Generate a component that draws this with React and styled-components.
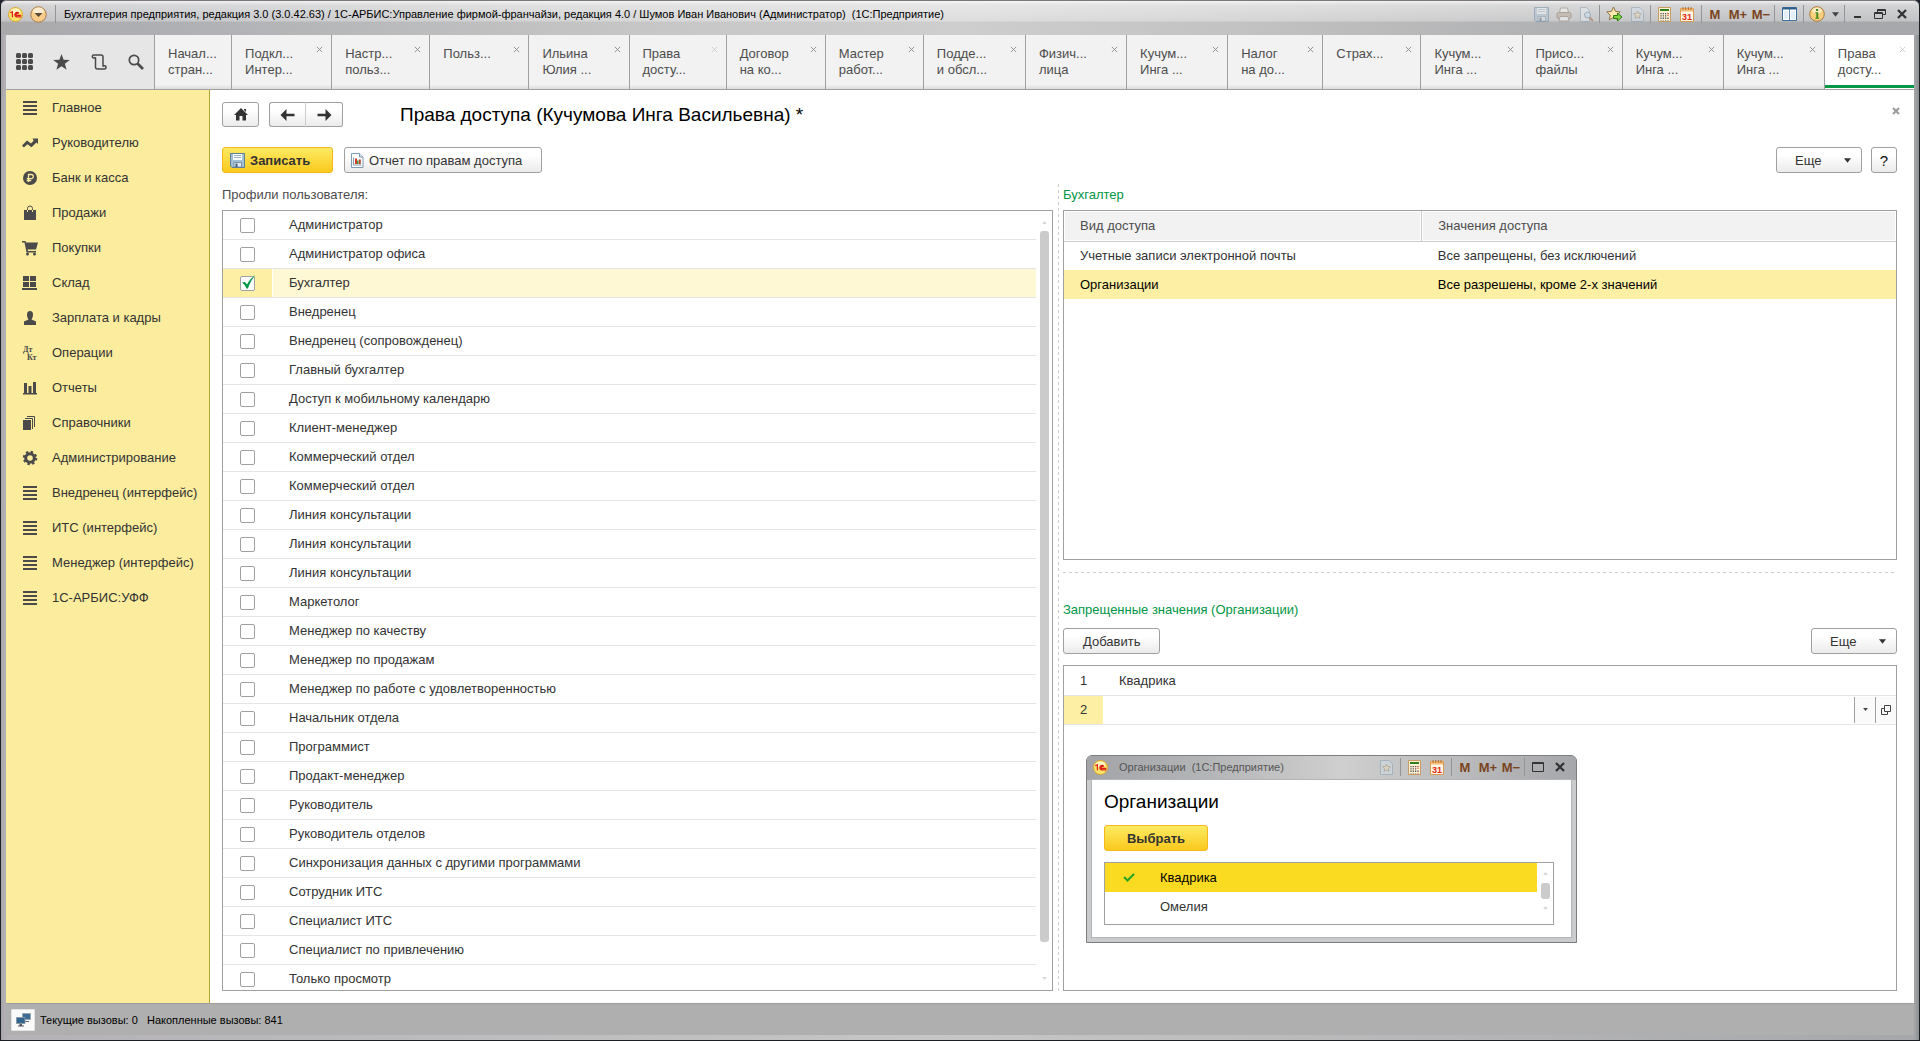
import React, { useState } from 'react';
import styled, { createGlobalStyle } from 'styled-components';

const GlobalStyle = createGlobalStyle`
  * {
    box-sizing: border-box;
  }
  body {
    margin: 0;
    background: #20242e;
    color: #333;
    font-family: "Liberation Sans", Arial, sans-serif;
    font-size: 13px;
  }
  button, input {
    font: inherit;
    color: inherit;
  }
  svg {
    display: block;
    flex: none;
  }
`;

const Frame = styled.div`
  height: 100vh;
  display: flex;
  flex-direction: column;
  padding: 0 5px 5px;
  background: linear-gradient(90deg, #a9a6aa 0, #b4b2b6 5px, #c6c6c6 50%, #a6a7aa calc(100% - 5px), #8c9090 100%);
  border: solid #1c1f24;
  border-width: 0 1px 1px;
  border-radius: 6px 6px 0 0;
`;

const TitleBar = styled.header`
  height: 35px;
  margin: 0 -5px;
  padding: 0 6px 8px 7px;
  display: flex;
  align-items: center;
  border-top: 1px solid #7c777b;
  border-radius: 6px 6px 0 0;
  background:
    linear-gradient(180deg, #ffffffd0 0, #ffffff80 4px, #ffffff50 20px, transparent 21px),
    linear-gradient(90deg, #a9a9ac 0, #b0b1b4 10%, #c6c6c6 33%, #cecece 50%, #c2c2c2 65%, #a7a8ab 90%);
`;

const WindowTitle = styled.div`
  flex: 1;
  margin-left: 6px;
  color: #000;
  font-size: 11px;
  white-space: pre;
`;

const TitleTools = styled.div`
  display: flex;
  align-items: center;
`;

const ToolButton = styled.button`
  width: ${(p) => p.$width || 24}px;
  height: 20px;
  padding: 0;
  border: 0;
  background: none;
  display: flex;
  align-items: center;
  justify-content: center;
  color: ${(p) => (p.$memory ? '#7a4320' : '#444')};
  font-size: 13px;
  font-weight: bold;
  opacity: ${(p) => (p.$faded ? 0.45 : 1)};
`;

const ToolSeparator = styled.span`
  width: 1px;
  height: 18px;
  margin: 0 2px;
  background: #939497;
`;

const TabBar = styled.div`
  height: 55px;
  display: flex;
  border-bottom: 1px solid #a0a0a0;
  background: #f2f2f2;
`;

const QuickTools = styled.div`
  width: 148px;
  flex: none;
  display: flex;
  align-items: center;
  background: #e6e6e6;
`;

const QuickButton = styled.button`
  flex: 1;
  height: 36px;
  padding: 0;
  border: 0;
  background: none;
  color: #4a4a4a;
  display: flex;
  align-items: center;
  justify-content: center;
`;

const Tab = styled.div`
  flex: ${(p) => p.$grow} 1 0;
  min-width: 0;
  padding: 11px 8px 0 13px;
  display: flex;
  align-items: flex-start;
  justify-content: space-between;
  border-left: 1px solid #a0a0a0;
  background: ${(p) => (p.$active ? '#fff' : 'linear-gradient(#f2f2f2 92%, #dcdcdc)')};
  box-shadow: ${(p) => (p.$active ? 'inset 0 -1px #fff, inset 0 -4px #009846' : 'none')};
`;

const TabLabel = styled.button`
  padding: 0;
  border: 0;
  background: none;
  color: #4d4d4d;
  text-align: left;
  line-height: 16px;
  white-space: pre;
`;

const TabClose = styled.button`
  padding: 0;
  border: 0;
  background: none;
  color: ${(p) => (p.$faded ? '#ccc' : '#888')};
`;

const Workspace = styled.div`
  flex: 1;
  min-height: 0;
  display: flex;
  background: #fff;
`;

const Sidebar = styled.nav`
  width: 204px;
  flex: none;
  background: #fbec9e;
  border-right: 1px solid #b3a42b;
`;

const SidebarLink = styled.a`
  height: 35px;
  padding-left: 16px;
  display: flex;
  align-items: center;
  gap: 14px;
  color: #333;
  text-decoration: none;
  white-space: nowrap;

  svg {
    color: #4a4a4a;
  }
`;

const Form = styled.main`
  flex: 1;
  min-width: 0;
  padding: 12px 17px 12px 12px;
  display: flex;
  flex-direction: column;
`;

const FormHeader = styled.div`
  height: 25px;
  margin-right: -3px;
  display: flex;
  align-items: center;
`;

const Button = styled.button`
  height: 26px;
  padding: 0 19px;
  display: flex;
  align-items: center;
  justify-content: center;
  gap: 5px;
  border: 1px solid #a0a0a0;
  border-radius: 3px;
  background: linear-gradient(#fff 30%, #ebebeb);
  color: #333;
  white-space: nowrap;
`;

const HomeButton = styled(Button)`
  width: 37px;
  height: 25px;
  padding: 0;
`;

const PrimaryButton = styled(Button)`
  border-color: #f4b81c;
  background: linear-gradient(#fdea64, #fbc91d);
  font-weight: bold;
`;

const SaveButton = styled(PrimaryButton)`
  width: 111px;
  padding: 0 7px;
  justify-content: flex-start;
`;

const ReportButton = styled(Button)`
  width: 198px;
  padding: 0 6px;
  justify-content: flex-start;
`;

const MoreButton = styled(Button)`
  width: 86px;
  padding: 0 10px 0 18px;
  justify-content: space-between;
`;

const HelpButton = styled(Button)`
  width: 26px;
  padding: 0;
  color: #111;
  font-size: 15px;
`;

const Arrows = styled.div`
  display: flex;
  margin-left: 10px;

  button {
    width: 37px;
    height: 25px;
    padding: 0;
  }
  button:first-child {
    border-radius: 3px 0 0 3px;
    border-right-color: #ccc;
  }
  button:last-child {
    border-radius: 0 3px 3px 0;
    border-left: 0;
  }
`;

const FormTitle = styled.h1`
  flex: 1;
  margin: 0 0 0 57px;
  color: #000;
  font-size: 19px;
  font-weight: normal;
`;

const FormClose = styled.button`
  align-self: flex-start;
  padding: 5px 0 0;
  border: 0;
  background: none;
  color: #999;
`;

const CommandBar = styled.div`
  margin-top: ${(p) => p.$top}px;
  display: flex;
  justify-content: space-between;
`;

const Commands = styled.div`
  display: flex;
  gap: ${(p) => p.$gap}px;
`;

const Split = styled.div`
  flex: 1;
  min-height: 0;
  margin-top: 11px;
  display: flex;
`;

const Column = styled.section`
  flex: ${(p) => p.$grow} 1 0;
  min-width: 0;
  display: flex;
  flex-direction: column;
`;

const VerticalSplitter = styled.div`
  width: 1px;
  margin: 0 4px 0 5px;
  background: repeating-linear-gradient(#ccc 0 3px, transparent 3px 6px);
`;

const HorizontalSplitter = styled.div`
  height: 1px;
  margin: 12px 0 26px;
  background: repeating-linear-gradient(90deg, #ccc 0 3px, transparent 3px 6px);
`;

const GroupTitle = styled.div`
  height: 20px;
  line-height: 22px;
  color: ${(p) => (p.$green ? '#009646' : '#4d4d4d')};
`;

const Box = styled.div`
  flex: ${(p) => p.$grow || 1} 1 0;
  min-height: 0;
  margin-top: ${(p) => p.$top}px;
  display: flex;
  border: 1px solid #a0a0a0;
  background: #fff;
  overflow: hidden;
`;

const ProfileList = styled.div`
  flex: 1;
  overflow: hidden;
`;

const ProfileRow = styled.label`
  height: 29px;
  display: flex;
  border-bottom: 1px solid #e5e5e5;
  background: ${(p) => (p.$checked ? '#fef8d4' : '#fff')};
`;

const CheckCell = styled.span`
  width: 50px;
  display: flex;
  align-items: center;
  padding-left: 17px;
  border-right: 1px solid #fff;
  background: ${(p) => (p.$checked ? '#fdf0a4' : '#fff')};
`;

const Checkbox = styled.input`
  appearance: none;
  flex: none;
  width: 15px;
  height: 15px;
  margin: 0;
  border: 1px solid #a0a0a0;
  border-radius: 2px;
  background: #fff;
`;

const CheckMark = styled.svg`
  margin-left: -13px;
  margin-top: -3px;
  pointer-events: none;
`;

const ProfileName = styled.span`
  padding-left: 16px;
  line-height: 28px;
`;

const ScrollTrack = styled.div`
  width: 16px;
  padding: ${(p) => p.$padding};
  display: flex;
  flex-direction: column;
  align-items: center;
  gap: ${(p) => p.$gap}px;
  color: #d8d8d8;
`;

const ScrollThumb = styled.div`
  width: 9px;
  flex: ${(p) => (p.$height ? 'none' : '1')};
  height: ${(p) => (p.$height ? p.$height + 'px' : 'auto')};
  margin-bottom: ${(p) => p.$rest || 0}px;
  border-radius: 3px;
  background: #cbcbcb;
`;

const Table = styled.table`
  width: 100%;
  align-self: flex-start;
  table-layout: fixed;
  border-collapse: collapse;
  text-align: left;
`;

const HeadCell = styled.th`
  width: ${(p) => p.$width || 'auto'};
  height: 30px;
  padding: 0 16px;
  border-bottom: 1px solid #ccc;
  border-right: 1px solid #ccc;
  background: #f2f2f2;
  box-shadow: inset 0 0 0 1px #fff;
  color: #4d4d4d;
  font-weight: normal;

  &:last-child {
    border-right: 0;
  }
`;

const AccessRow = styled.tr`
  height: 29px;
  background: ${(p) => (p.$selected ? '#fdf0a4' : '#fff')};
  color: ${(p) => (p.$selected ? '#000' : '#333')};

  td {
    padding: 0 16px;
  }
`;

const ValueRow = styled.tr`
  height: 29px;
  border-bottom: 1px solid #e5e5e5;

  th {
    width: 39px;
    padding: 0;
    font-weight: normal;
    text-align: center;
    background: ${(p) => (p.$editing ? '#fdf0a4' : '#fff')};
  }
  td {
    padding: 0 0 0 ${(p) => (p.$editing ? 0 : 16)}px;
  }
`;

const ValueEditor = styled.div`
  height: 28px;
  padding: 1px 0;
  display: flex;
`;

const ValueInput = styled.input`
  flex: 1;
  min-width: 0;
  padding: 0 16px;
  border: 0;
  outline: 0;
  background: #fff;
`;

const EditorButton = styled.button`
  width: 21px;
  padding: 0;
  border: 0;
  border-left: 1px solid #a0a0a0;
  background: #fafafa;
  color: #444;
  display: flex;
  align-items: center;
  justify-content: center;
`;

const StatusBar = styled.footer`
  height: 32px;
  padding-left: 5px;
  display: flex;
  align-items: center;
  gap: 5px;
  border-top: 1px solid #9c9c9c;
  background: #afafaf;
  color: #000;
  font-size: 11px;
  white-space: pre;
`;

const StatusButton = styled.button`
  width: 24px;
  height: 22px;
  padding: 0;
  border: 1px solid #e3e3e3;
  border-radius: 1px;
  background: #fafafa;
  display: flex;
  align-items: center;
  justify-content: center;
`;

const Dialog = styled.section`
  position: absolute;
  left: 1086px;
  top: 755px;
  width: 491px;
  padding: 0 5px 5px;
  border: 1px solid #7e7e80;
  border-radius: 6px 6px 0 0;
  background: #c9cbcc;
`;

const DialogBar = styled.header`
  height: 24px;
  margin: 0 -5px;
  padding: 0 5px 2px 6px;
  display: flex;
  align-items: center;
  border-radius: 5px 5px 0 0;
  background: linear-gradient(90deg, #a3a4a7, #b4b5b7 25%, #cfcfcf 52%, #a6a7aa);
`;

const DialogCaption = styled.div`
  flex: 1;
  margin-left: 11px;
  color: #555;
  font-size: 11px;
  white-space: pre;
`;

const DialogBody = styled.div`
  padding: 11px 17px 12px 12px;
  display: flex;
  flex-direction: column;
  align-items: flex-start;
  background: #fff;
  box-shadow: 0 0 0 1px #b3b4b6;
`;

const DialogTitle = styled.h2`
  margin: 0;
  line-height: 22px;
  color: #000;
  font-size: 19px;
  font-weight: normal;
`;

const SelectButton = styled(PrimaryButton)`
  width: 104px;
  margin-top: 12px;
`;

const DialogList = styled.div`
  width: 100%;
  height: 63px;
  margin-top: 11px;
  display: flex;
  border: 1px solid #a0a0a0;
`;

const OptionList = styled.div`
  flex: 1;
`;

const Option = styled.button`
  width: 100%;
  height: 29px;
  padding: 0 0 0 18px;
  border: 0;
  display: flex;
  align-items: center;
  background: ${(p) => (p.$selected ? '#fbdb22' : '#fff')};
  color: ${(p) => (p.$selected ? '#000' : '#333')};
`;

const OptionMark = styled.span`
  width: 37px;
  color: #27a327;
`;

/* ---------- icons ---------- */

const Cross = ({ size = 7, width = 1 }) => (
  <svg width={size} height={size} viewBox="0 0 8 8" stroke="currentColor" strokeWidth={width} fill="none">
    <path d="M1 1l6 6M7 1L1 7" />
  </svg>
);

const Caret = ({ size = 7, up }) => (
  <svg width={size} height={size - 2} viewBox="0 0 8 5" fill="currentColor">
    <path d={up ? 'M0 5h8L4 0z' : 'M0 0h8L4 5z'} />
  </svg>
);

const Logo1C = () => (
  <svg width="15" height="15" viewBox="0 0 16 16">
    <circle cx="8" cy="8" r="7.5" fill="#fbe26b" stroke="#d9a52c" />
    <ellipse cx="8" cy="4.5" rx="5" ry="3" fill="#fff6c4" />
    <path d="M2.5 6.2L4.7 5v6M11.6 6.6a2.4 2.4 0 1 0-1.8 3.9h4.4M11 7.6a1.2 1.2 0 1 0-1.2 1.4h4.4" fill="none" stroke="#dc1f17" strokeWidth="1.3" />
  </svg>
);

const MenuBall = () => (
  <svg width="17" height="17" viewBox="0 0 17 17">
    <circle cx="8.500" cy="8.500" r="7.700" fill="#f8cd8b" stroke="#a97a45" />
    <ellipse cx="8.500" cy="5" rx="5.500" ry="3.500" fill="#fdebcf" />
    <path d="M4.500 7h8l-4 4z" fill="#5a4a3c" />
  </svg>
);

const Floppy = () => (
  <svg width="15" height="15" viewBox="0 0 15 15">
    <path d="M.5.500h14v14H2l-1.500-1.500z" fill="#a3bfd4" stroke="#5f7f9a" />
    <path d="M3 1h9v6H3z" fill="#f6fafc" />
    <path d="M4 2.500h7M4 4.500h7" stroke="#9fb6c8" />
    <path d="M4 9.500h7.500V14H4z" fill="#e4ebf0" stroke="#5c7a94" strokeWidth=".7" />
    <path d="M5.500 10.500h2V14h-2z" fill="#3f5d78" />
  </svg>
);

const Printer = () => (
  <svg width="16" height="15" viewBox="0 0 16 15">
    <path d="M4.500 1h7l1 5h-9z" fill="#fff" stroke="#8a7a66" />
    <rect x="1" y="5.500" width="14" height="6" rx="1.500" fill="#b9a78f" stroke="#7c6a55" />
    <path d="M4 9.500h8l1 4.500H3z" fill="#fff" stroke="#8a7a66" />
  </svg>
);

const Preview = () => (
  <svg width="15" height="15" viewBox="0 0 15 15" fill="none">
    <path d="M1.500.500h6l3 3v11h-9z" fill="#e9f1f6" stroke="#7f9bb0" />
    <circle cx="8.500" cy="8" r="3" fill="#cfe3f1" stroke="#5f86a5" />
    <path d="M10.500 10.500l3.500 3.500" stroke="#9c5b33" strokeWidth="2" />
  </svg>
);

const StarGo = () => (
  <svg width="17" height="16" viewBox="0 0 17 16">
    <path d="M7.500 1l2 4.400 4.700.500-3.500 3.200 1 4.700-4.200-2.400-4.200 2.400 1-4.700L.8 5.900l4.700-.5z" fill="#ffe9ae" stroke="#8d7347" />
    <path d="M7.500 9.500h4V7l4.500 4-4.500 4v-2.500h-4z" fill="#7ed33f" stroke="#2f7d14" />
  </svg>
);

const PageStar = () => (
  <svg width="13" height="15" viewBox="0 0 13 15">
    <path d="M.5.500h8.500l3.500 3.500v10.500H.5z" fill="#d3e2ee" stroke="#7f98ac" />
    <path d="M6.500 4l1.200 2.500 2.800.3-2.100 1.900.6 2.700-2.500-1.400L4 11.400l.6-2.700-2.100-1.900 2.800-.3z" fill="#f2dfb6" stroke="#8d7a5a" strokeWidth=".8" />
  </svg>
);

const Calculator = () => (
  <svg width="13" height="15" viewBox="0 0 13 15">
    <path d="M.5.500h12v14H.5z" fill="#fff2d4" stroke="#c99b63" />
    <path d="M2 2h9v2H2z" fill="#2f7d1c" />
    <path d="M3 6v7.500M5.300 6v7.500M7.600 6v7.500" stroke="#555" strokeWidth="1.300" strokeDasharray="1.300 1" />
    <path d="M10 6v3" stroke="#d33a22" strokeWidth="1.300" strokeDasharray="1.300 1" />
    <path d="M10 10.600v3" stroke="#555" strokeWidth="1.300" strokeDasharray="1.300 1" />
  </svg>
);

const CalendarIcon = () => (
  <svg width="14" height="15" viewBox="0 0 14 15">
    <path d="M.5 1.500h13v13H.5z" fill="#fff6e6" stroke="#d79a52" />
    <path d="M1 1.500h12v3H1z" fill="#f5bd78" />
    <path d="M3 0v3M5.700 0v3M8.400 0v3M11 0v3" stroke="#a85a1c" strokeWidth=".8" />
    <text x="7" y="13" textAnchor="middle" fontSize="9" fontFamily="Liberation Sans" fill="#e02a16">31</text>
  </svg>
);

const Panels = () => (
  <svg width="15" height="14" viewBox="0 0 15 14">
    <path d="M.5.500h14v13H.5z" fill="#fff" stroke="#3f6f99" />
    <path d="M1 1.500h13" stroke="#2d5f8c" strokeWidth="2" />
    <path d="M7.500 2v11" stroke="#5d86aa" />
    <path d="M2 4h4v8H2zM9 4h4v8H9z" fill="#e3eff8" />
  </svg>
);

const Info = () => (
  <svg width="16" height="16" viewBox="0 0 16 16">
    <circle cx="8" cy="8" r="7.300" fill="#fbd07c" stroke="#a9783c" />
    <ellipse cx="8" cy="4.500" rx="5" ry="3" fill="#fdeac4" />
    <path d="M7 3h2.200v2H7zM6.300 6.300h2.900v5.500h1v1H6.300v-1h1V7.300h-1z" fill="#3f8a1d" />
  </svg>
);

const WindowIcon = ({ kind }) => (
  <svg width="12" height="12" viewBox="0 0 12 12" fill="none" stroke="#333" strokeWidth="1">
    {kind === 'min' && <path d="M2 9h7" strokeWidth="2" />}
    {kind === 'restore' && <path d="M3.500 4V1.500h8v5H9M3.500 2.500h8M.5 4.500h8v6h-8zM.5 5.500h8" />}
    {kind === 'max' && <path d="M.5 1.500h11v9H.5zM.5 2.500h11" />}
    {kind === 'close' && <path d="M2 2l8 8M10 2l-8 8" strokeWidth="2.300" />}
  </svg>
);

const ReportIcon = () => (
  <svg width="13" height="15" viewBox="0 0 13 15">
    <path d="M.5.500h8l3.500 3.500v10.500H.5z" fill="#fff" stroke="#7f9bb3" />
    <path d="M8.500.500v3.500H12" fill="#dce6ee" stroke="#7f9bb3" />
    <path d="M2.500 4.500v7.500h8" fill="none" stroke="#8a9aa8" />
    <path d="M4 5.500h2V11H4z" fill="#d43b2a" />
    <path d="M6 7.500h1.500V11H6z" fill="#3a9b3f" />
    <path d="M7.800 6.500h2V11h-2z" fill="#b34a2f" />
  </svg>
);

const HomeIcon = () => (
  <svg width="14" height="13" viewBox="0 0 14 13" fill="#333">
    <path d="M7 0l7 7h-2v5.500H8.500V8h-3v4.500H2V7H0zM10 1h2v3l-2-2z" />
  </svg>
);

const Arrow = ({ right }) => (
  <svg width="15" height="12" viewBox="0 0 15 12" fill="#333">
    <path d={right ? 'M8.500 0l6 6-6 6V7.200H.5V4.800h8z' : 'M6.500 0l-6 6 6 6V7.200h8V4.800h-8z'} />
  </svg>
);

const GridDots = () => (
  <svg width="18" height="18" viewBox="0 0 18 18" fill="currentColor">
    {[0, 6, 12].map((y) => [0, 6, 12].map((x) => (
      <rect key={x + '-' + y} x={x} y={y} width="5" height="5" rx="1.500" />
    )))}
  </svg>
);

const StarIcon = () => (
  <svg width="17" height="16" viewBox="0 0 17 16" fill="currentColor">
    <path d="M8.500 0l2.100 5.800 6.200.200-4.900 3.800 1.700 6-5.100-3.500L3.400 15.800l1.700-6L.2 6l6.200-.2z" />
  </svg>
);

const ScrollIcon = () => (
  <svg width="16" height="16" viewBox="0 0 16 16" fill="none" stroke="currentColor" strokeWidth="1.500">
    <path d="M4.500 3.500V13a2 2 0 0 0 2 2h7a1.600 1.600 0 1 0-1.500-2.200M12 12.500V3a2 2 0 0 0-2-2H2.700a1.500 1.500 0 1 0 1.500 2" />
  </svg>
);

const SearchIcon = () => (
  <svg width="16" height="16" viewBox="0 0 16 16" fill="none" stroke="currentColor">
    <circle cx="6" cy="6" r="4.700" strokeWidth="1.700" />
    <path d="M9.500 9.500l5.500 5.500" strokeWidth="2.700" />
  </svg>
);

const Monitors = () => (
  <svg width="15" height="14" viewBox="0 0 15 14">
    <path d="M6.500.500h8v6h-8z" fill="#3b6d97" stroke="#9aa7b1" />
    <path d="M9 8h4v1H9z" fill="#667" />
    <path d="M.5 4.500h8.500v6H.5z" fill="#33658f" stroke="#8797a4" />
    <path d="M3.500 11h2.500v1.500H8v1H2v-1h1.500z" fill="#556" />
  </svg>
);

const OpenIcon = () => (
  <svg width="10" height="10" viewBox="0 0 10 10" fill="none" stroke="currentColor">
    <path d="M3.500.500h6v6h-6zM3.500 3.500h-3v6h6v-3" />
  </svg>
);

const GreenCheck = () => (
  <CheckMark width="14" height="14" viewBox="0 0 14 14" fill="#009846">
    <path d="M0 7.500l3-.5 2 2.600Q8 3.500 13.500 0 8.500 5.500 6 13.500H4.500Q3 9.500 0 7.500z" />
  </CheckMark>
);

const sectionShapes = {
  menu: <path d="M1 1h14v2H1zM1 5h14v2H1zM1 9h14v2H1zM1 13h14v2H1z" />,
  trend: <path d="M0 10.500l5-5 4 3 2.700-3L10.500 3.500H16V9l-1.500-1.500-5 4.700-4-3L1.800 12.500z" />,
  ruble: (
    <>
      <circle cx="8" cy="8" r="7" />
      <path d="M6.500 12V4.500h2.700a2 2 0 0 1 0 4.200H4.700M4.700 10.500h4.500" fill="none" stroke="#fbec9e" strokeWidth="1.300" />
    </>
  ),
  bag: (
    <>
      <path d="M2 5h12v10H2z" />
      <path d="M5.500 6V3.500a2.500 2.500 0 0 1 5 0V6" fill="none" stroke="currentColor" />
      <path d="M5.500 5v2M10.500 5v2" stroke="#fbec9e" />
    </>
  ),
  cart: (
    <>
      <path d="M0 1h3.500l.5 1.500h12L14 9.500H5.500l.5 1.500h8v1.500H4.500L2.500 2.500H0z" />
      <circle cx="5.500" cy="14" r="1.500" />
      <circle cx="12.500" cy="14" r="1.500" />
    </>
  ),
  store: <path d="M1 1h6v5H1zM8 1h6v5H8zM1 7h6v5H1zM8 7h6v5H8zM0 13h15v2H0z" />,
  person: <path d="M8 1c2 0 3 1.300 3 3.500S10 9 9.500 9.500L14 11.500V15H2v-3.500l4.500-2C6 9 5 6.700 5 4.500S6 1 8 1z" />,
  report: <path d="M2 3h3v10H2zM6.500 6h3v7h-3zM11 2h3v11h-3zM1 13h14v1.500H1z" />,
  books: (
    <>
      <path d="M1 5h8v10H1z" />
      <path d="M3 3.500h7.500V14M5 1.500h7.500V12" fill="none" stroke="currentColor" />
    </>
  ),
  gear: (
    <>
      <circle cx="8" cy="8" r="4.300" fill="none" stroke="currentColor" strokeWidth="3" />
      <circle cx="8" cy="8" r="6.200" fill="none" stroke="currentColor" strokeWidth="2" strokeDasharray="2.430 2.430" />
    </>
  ),
  debit: (
    <g fontFamily="Liberation Serif" fontWeight="bold" fontSize="8">
      <text x="1" y="7">Дт</text>
      <text x="5" y="15">Кт</text>
    </g>
  ),
};

const SectionIcon = ({ name }) => (
  <svg width="16" height="16" viewBox="0 0 16 16" fill="currentColor">
    {sectionShapes[name]}
  </svg>
);

/* ---------- data ---------- */

const tabs = [
  { lines: 'Начал...\nстран...', grow: 55, fixed: true },
  { lines: 'Подкл...\nИнтер...', grow: 78 },
  { lines: 'Настр...\nпольз...', grow: 76 },
  { lines: 'Польз...', grow: 77 },
  { lines: 'Ильина\nЮлия ...', grow: 78 },
  { lines: 'Права\nдосту...', grow: 75, faded: true },
  { lines: 'Договор\nна ко...', grow: 77 },
  { lines: 'Мастер\nработ...', grow: 76 },
  { lines: 'Подде...\nи обсл...', grow: 80 },
  { lines: 'Физич...\nлица', grow: 79 },
  { lines: 'Кучум...\nИнга ...', grow: 79 },
  { lines: 'Налог\nна до...', grow: 73 },
  { lines: 'Страх...', grow: 76 },
  { lines: 'Кучум...\nИнга ...', grow: 79 },
  { lines: 'Присо...\nфайлы', grow: 78 },
  { lines: 'Кучум...\nИнга ...', grow: 79 },
  { lines: 'Кучум...\nИнга ...', grow: 79 },
  { lines: 'Права\nдосту...', grow: 68, faded: true, active: true },
];

const sections = [
  ['menu', 'Главное'],
  ['trend', 'Руководителю'],
  ['ruble', 'Банк и касса'],
  ['bag', 'Продажи'],
  ['cart', 'Покупки'],
  ['store', 'Склад'],
  ['person', 'Зарплата и кадры'],
  ['debit', 'Операции'],
  ['report', 'Отчеты'],
  ['books', 'Справочники'],
  ['gear', 'Администрирование'],
  ['menu', 'Внедренец (интерфейс)'],
  ['menu', 'ИТС (интерфейс)'],
  ['menu', 'Менеджер (интерфейс)'],
  ['menu', '1С-АРБИС:УФФ'],
];

const profiles = [
  'Администратор',
  'Администратор офиса',
  'Бухгалтер',
  'Внедренец',
  'Внедренец (сопровожденец)',
  'Главный бухгалтер',
  'Доступ к мобильному календарю',
  'Клиент-менеджер',
  'Коммерческий отдел',
  'Коммерческий отдел',
  'Линия консультации',
  'Линия консультации',
  'Линия консультации',
  'Маркетолог',
  'Менеджер по качеству',
  'Менеджер по продажам',
  'Менеджер по работе с удовлетворенностью',
  'Начальник отдела',
  'Программист',
  'Продакт-менеджер',
  'Руководитель',
  'Руководитель отделов',
  'Синхронизация данных с другими программами',
  'Сотрудник ИТС',
  'Специалист ИТС',
  'Специалист по привлечению',
  'Только просмотр',
];

const MemoryButtons = () => (
  <>
    <ToolButton $memory $width={22}>M</ToolButton>
    <ToolButton $memory $width={24}>M+</ToolButton>
    <ToolButton $memory $width={22}>M−</ToolButton>
  </>
);

const OrganizationsDialog = () => {
  const [selected, setSelected] = useState('Квадрика');
  return (
    <Dialog role="dialog" aria-label="Организации">
      <DialogBar>
        <Logo1C />
        <DialogCaption>Организации  (1С:Предприятие)</DialogCaption>
        <TitleTools>
          <ToolButton $faded aria-label="Избранное"><PageStar /></ToolButton>
          <ToolSeparator />
          <ToolButton $width={22} aria-label="Калькулятор"><Calculator /></ToolButton>
          <ToolButton aria-label="Календарь"><CalendarIcon /></ToolButton>
          <ToolSeparator />
          <MemoryButtons />
          <ToolSeparator />
          <ToolButton $width={22} aria-label="Развернуть"><WindowIcon kind="max" /></ToolButton>
          <ToolButton $width={22} aria-label="Закрыть"><WindowIcon kind="close" /></ToolButton>
        </TitleTools>
      </DialogBar>
      <DialogBody>
        <DialogTitle>Организации</DialogTitle>
        <SelectButton>Выбрать</SelectButton>
        <DialogList>
          <OptionList>
            {['Квадрика', 'Омелия'].map((name) => (
              <Option key={name} $selected={name === selected} onClick={() => setSelected(name)}>
                <OptionMark>
                  {name === 'Квадрика' && (
                    <svg width="12" height="9" viewBox="0 0 12 9" fill="none" stroke="currentColor" strokeWidth="2">
                      <path d="M1 4l3.500 3.500L11 1" />
                    </svg>
                  )}
                </OptionMark>
                {name}
              </Option>
            ))}
          </OptionList>
          <ScrollTrack $padding="9px 0" $gap={8}>
            <Caret size={5} up />
            <ScrollThumb $height={16} />
            <Caret size={5} />
          </ScrollTrack>
        </DialogList>
      </DialogBody>
    </Dialog>
  );
};

const App = () => {
  const [checked, setChecked] = useState([2]);

  const toggle = (index) => {
    setChecked(checked.includes(index) ? checked.filter((i) => i !== index) : [...checked, index]);
  };

  return (
    <>
      <GlobalStyle />
      <Frame>
        <TitleBar>
          <Logo1C />
          <ToolButton $width={30} aria-label="Главное меню"><MenuBall /></ToolButton>
          <ToolSeparator />
          <WindowTitle>
            {'Бухгалтерия предприятия, редакция 3.0 (3.0.42.63) / 1С-АРБИС:Управление фирмой-франчайзи, редакция 4.0 / Шумов Иван Иванович (Администратор)  (1С:Предприятие)'}
          </WindowTitle>
          <TitleTools>
            <ToolButton $faded aria-label="Сохранить"><Floppy /></ToolButton>
            <ToolButton $faded $width={22} aria-label="Печать"><Printer /></ToolButton>
            <ToolButton $faded $width={22} aria-label="Просмотр"><Preview /></ToolButton>
            <ToolSeparator />
            <ToolButton $width={24} aria-label="Добавить в избранное"><StarGo /></ToolButton>
            <ToolButton $faded $width={22} aria-label="Избранное"><PageStar /></ToolButton>
            <ToolSeparator />
            <ToolButton $width={22} aria-label="Калькулятор"><Calculator /></ToolButton>
            <ToolButton aria-label="Календарь"><CalendarIcon /></ToolButton>
            <ToolSeparator />
            <MemoryButtons />
            <ToolSeparator />
            <ToolButton aria-label="Панели"><Panels /></ToolButton>
            <ToolSeparator />
            <ToolButton $width={22} aria-label="Справка"><Info /></ToolButton>
            <ToolButton $width={14} aria-label="Еще команды"><Caret size={7} /></ToolButton>
            <ToolSeparator />
            <ToolButton $width={22} aria-label="Свернуть"><WindowIcon kind="min" /></ToolButton>
            <ToolButton $width={22} aria-label="Восстановить"><WindowIcon kind="restore" /></ToolButton>
            <ToolButton $width={22} aria-label="Закрыть"><WindowIcon kind="close" /></ToolButton>
          </TitleTools>
        </TitleBar>

        <TabBar>
          <QuickTools>
            <QuickButton aria-label="Функции"><GridDots /></QuickButton>
            <QuickButton aria-label="Избранное"><StarIcon /></QuickButton>
            <QuickButton aria-label="История"><ScrollIcon /></QuickButton>
            <QuickButton aria-label="Поиск"><SearchIcon /></QuickButton>
          </QuickTools>
          {tabs.map((tab, i) => (
            <Tab key={i} $grow={tab.grow} $active={tab.active}>
              <TabLabel>{tab.lines}</TabLabel>
              {!tab.fixed && (
                <TabClose $faded={tab.faded} aria-label="Закрыть вкладку"><Cross /></TabClose>
              )}
            </Tab>
          ))}
        </TabBar>

        <Workspace>
          <Sidebar>
            {sections.map(([icon, name]) => (
              <SidebarLink key={name} href="#">
                <SectionIcon name={icon} />
                {name}
              </SidebarLink>
            ))}
          </Sidebar>

          <Form>
            <FormHeader>
              <HomeButton aria-label="Начальная страница"><HomeIcon /></HomeButton>
              <Arrows>
                <Button aria-label="Назад"><Arrow /></Button>
                <Button aria-label="Вперед"><Arrow right /></Button>
              </Arrows>
              <FormTitle>Права доступа (Кучумова Инга Васильевна) *</FormTitle>
              <FormClose aria-label="Закрыть"><Cross size={8} width={2} /></FormClose>
            </FormHeader>

            <CommandBar $top={20}>
              <Commands $gap={11}>
                <SaveButton><Floppy />Записать</SaveButton>
                <ReportButton><ReportIcon />Отчет по правам доступа</ReportButton>
              </Commands>
              <Commands $gap={9}>
                <MoreButton>Еще<Caret size={7} /></MoreButton>
                <HelpButton>?</HelpButton>
              </Commands>
            </CommandBar>

            <Split>
              <Column $grow={831}>
                <GroupTitle>Профили пользователя:</GroupTitle>
                <Box $top={6}>
                  <ProfileList>
                    {profiles.map((name, i) => (
                      <ProfileRow key={i} $checked={checked.includes(i)}>
                        <CheckCell $checked={checked.includes(i)}>
                          <Checkbox type="checkbox" checked={checked.includes(i)} onChange={() => toggle(i)} />
                          {checked.includes(i) && <GreenCheck />}
                        </CheckCell>
                        <ProfileName>{name}</ProfileName>
                      </ProfileRow>
                    ))}
                  </ProfileList>
                  <ScrollTrack $padding="10px 0" $gap={7}>
                    <Caret size={5} up />
                    <ScrollThumb $rest={28} />
                    <Caret size={5} />
                  </ScrollTrack>
                </Box>
              </Column>

              <VerticalSplitter />

              <Column $grow={834}>
                <GroupTitle $green>Бухгалтер</GroupTitle>
                <Box $top={6} $grow={350}>
                  <Table>
                    <thead>
                      <tr>
                        <HeadCell $width="43%">Вид доступа</HeadCell>
                        <HeadCell>Значения доступа</HeadCell>
                      </tr>
                    </thead>
                    <tbody>
                      <AccessRow>
                        <td>Учетные записи электронной почты</td>
                        <td>Все запрещены, без исключений</td>
                      </AccessRow>
                      <AccessRow $selected>
                        <td>Организации</td>
                        <td>Все разрешены, кроме 2-х значений</td>
                      </AccessRow>
                    </tbody>
                  </Table>
                </Box>
                <HorizontalSplitter />
                <GroupTitle $green>Запрещенные значения (Организации)</GroupTitle>
                <CommandBar $top={9}>
                  <Button>Добавить</Button>
                  <MoreButton>Еще<Caret size={7} /></MoreButton>
                </CommandBar>
                <Box $top={11} $grow={325}>
                  <Table>
                    <tbody>
                      <ValueRow>
                        <th scope="row">1</th>
                        <td>Квадрика</td>
                      </ValueRow>
                      <ValueRow $editing>
                        <th scope="row">2</th>
                        <td>
                          <ValueEditor>
                            <ValueInput aria-label="Организация" />
                            <EditorButton aria-label="Выбрать из списка"><Caret size={5} /></EditorButton>
                            <EditorButton aria-label="Открыть"><OpenIcon /></EditorButton>
                          </ValueEditor>
                        </td>
                      </ValueRow>
                    </tbody>
                  </Table>
                </Box>
              </Column>
            </Split>
          </Form>
        </Workspace>

        <StatusBar>
          <StatusButton aria-label="Вызовы сервера"><Monitors /></StatusButton>
          <span>{'Текущие вызовы: 0   Накопленные вызовы: 841'}</span>
        </StatusBar>
      </Frame>
      <OrganizationsDialog />
    </>
  );
};

export default App;
